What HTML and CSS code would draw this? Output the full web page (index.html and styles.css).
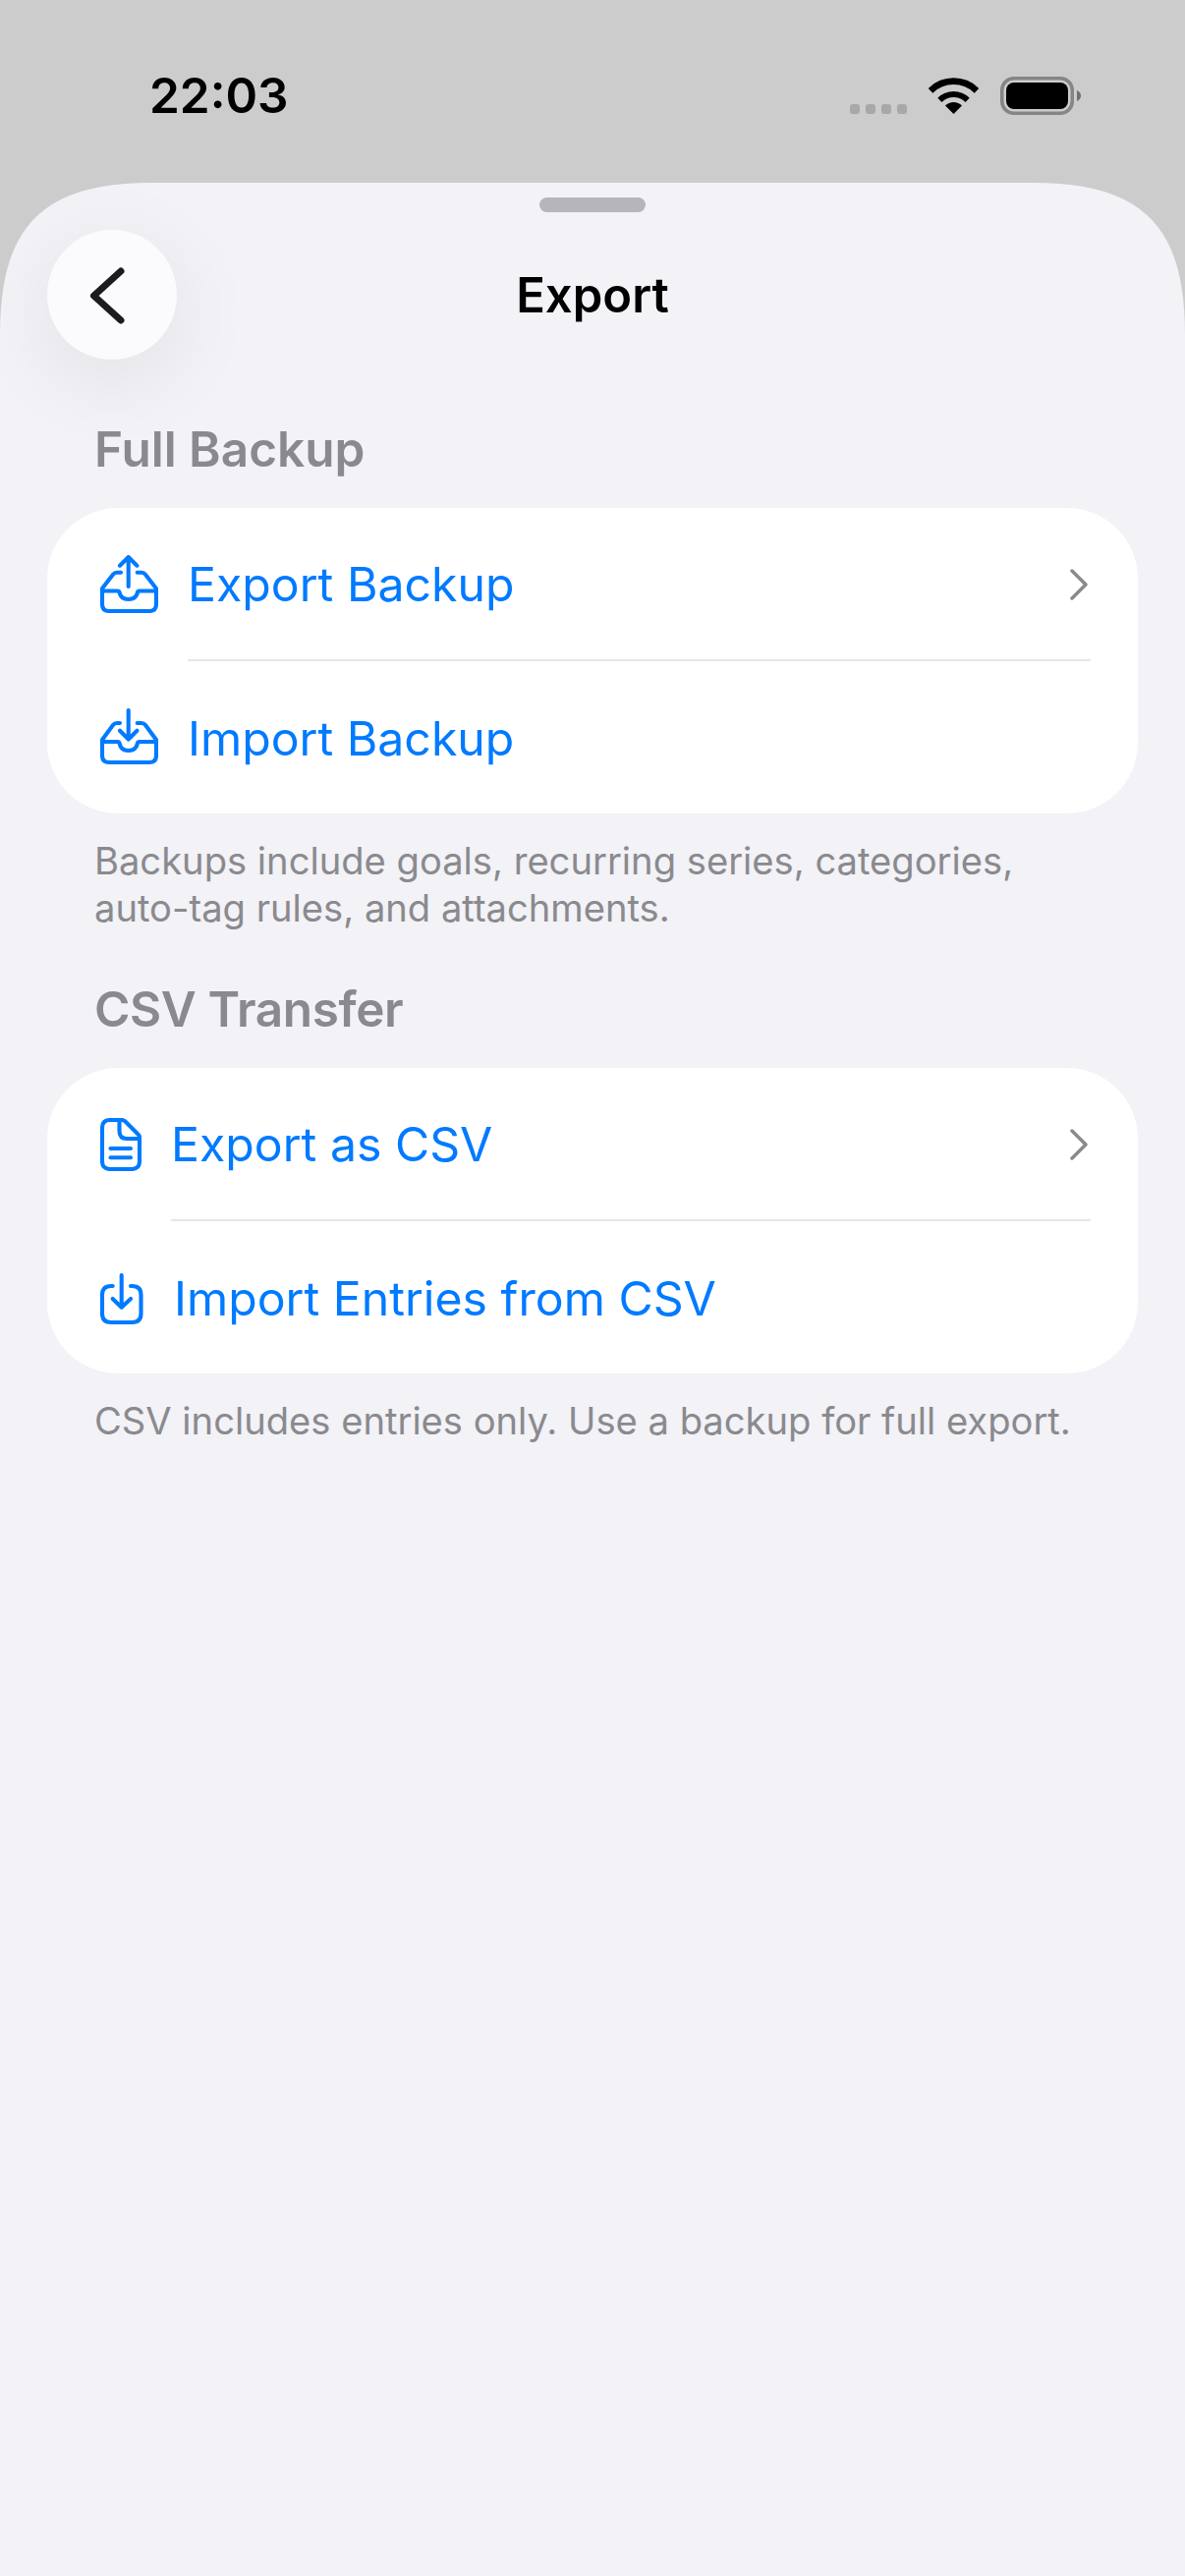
FILE: index.html
```html
<!DOCTYPE html>
<html lang="en">
<head>
<meta charset="utf-8">
<title>Export</title>
<link rel="stylesheet" href="styles.css">
</head>
<body>
<div class="screen">
  <header class="status">
    <span class="time">22:03</span>
    <div class="status-icons">
      <div class="dots"><i></i><i></i><i></i><i></i></div>
      <svg class="wifi" width="51" height="37" viewBox="0 0 51 37"><path d="M2 13.3A33.5 33.5 0 0 1 49 13.3" fill="none" stroke="#000" stroke-width="6.6"/><path d="M11.4 22.9A20 20 0 0 1 39.6 22.9" fill="none" stroke="#000" stroke-width="6"/><path d="M25.5 37L17 28.5A12 12 0 0 1 34 28.5Z" fill="#000"/></svg>
      <svg class="battery" width="82" height="39" viewBox="0 0 82 39"><rect x="1.75" y="1.75" width="71.5" height="35.5" rx="12" fill="none" stroke="#858585" stroke-width="3.5"/><rect x="6" y="6" width="63" height="27" rx="8" fill="#000"/><path d="M78 14C80.500 15 82 17 82 19.500C82 22 80.500 24 78 25Z" fill="#6f6f6f"/></svg>
    </div>
  </header>
  <main class="sheet">
    <div class="handle"></div>
    <div class="nav">
      <button class="back" type="button" aria-label="Back">
        <svg width="132" height="132" viewBox="0 0 132 132"><path d="M75 42L47.500 67L75 92" fill="none" stroke="#1c1c1e" stroke-width="7" stroke-linecap="round" stroke-linejoin="round"/></svg>
      </button>
      <h1 class="title">Export</h1>
    </div>

    <h2 class="section-title">Full Backup</h2>
    <section class="card">
      <div class="row">
        <svg class="icon tray" width="59" height="59" viewBox="0 0 59 59"><path d="M21 17.700H17Q14.500 17.700 13 19.700L2 34V50Q2 57 9 57H50Q57 57 57 50V34L46 19.700Q44.500 17.700 42 17.700H37.700"/><path d="M2 36.500H17.500Q19.300 36.500 19.500 38Q21 45 28.700 45Q36.500 45 38 38Q38.200 36.500 40 36.500H57"/><path d="M28.700 2V32M20 10.700L28.700 2L37.400 10.700"/></svg>
        <div class="row-body"><span class="row-label">Export Backup</span><svg class="chev" width="20" height="32" viewBox="0 0 20 32"><path d="M3 2L17 16L3 30"/></svg></div>
      </div>
      <div class="row">
        <svg class="icon tray" width="59" height="59" viewBox="0 0 59 59"><path d="M20 15H17Q14.500 15 13 17L2 32V48Q2 55 9 55H50Q57 55 57 48V32L46 17Q44.500 15 42 15H37.700"/><path d="M2 34H17.500Q19.300 34 19.500 35.500Q21 43 28.700 43Q36.500 43 38 35.500Q38.200 34 40 34H57"/><path d="M28.700 2V31.500M20 22.700L28.700 31.500L37.400 22.700"/></svg>
        <div class="row-body row-body-last"><span class="row-label">Import Backup</span></div>
      </div>
    </section>
    <p class="note">Backups include goals, recurring series, categories, auto-tag rules, and attachments.</p>

    <h2 class="section-title section-title-next">CSV Transfer</h2>
    <section class="card">
      <div class="row">
        <svg class="icon doc" width="42" height="54" viewBox="0 0 42 54"><path d="M22 2H10Q2 2 2 10V44Q2 52 10 52H32Q40 52 40 44V19.500Q40 18 38.500 16.500L25.500 3.500Q24 2 22 2Z"/><path d="M19.500 2.500V13Q19.500 21 27 21H39"/><path d="M10.500 31H31M10.500 40.300H31"/></svg>
        <div class="row-body"><span class="row-label">Export as CSV</span><svg class="chev" width="20" height="32" viewBox="0 0 20 32"><path d="M3 2L17 16L3 30"/></svg></div>
      </div>
      <div class="row">
        <svg class="icon box" width="44" height="53" viewBox="0 0 44 53"><path d="M12.700 13H11Q2 13 2 22V41Q2 50 11 50H32.500Q41.500 50 41.500 41V22Q41.500 13 32.500 13H31"/><path d="M21.700 2V34.500M12.700 26L21.700 34.700L31 26"/></svg>
        <div class="row-body row-body-last"><span class="row-label row-label-offset">Import Entries from CSV</span></div>
      </div>
    </section>
    <p class="note">CSV includes entries only. Use a backup for full export.</p>
  </main>
</div>
</body>
</html>
```
FILE: styles.css
```css
* { box-sizing: border-box; }
html, body { margin: 0; padding: 0; }
body { background: #cccccc; font-family: Inter, "Liberation Sans", sans-serif; }
.screen { width: 1206px; height: 2622px; display: flex; flex-direction: column; overflow: hidden; }

.status { height: 186px; flex: none; display: flex; justify-content: space-between; align-items: flex-start; padding: 67px 106px 0 152px; }
.time { font-size: 49.500px; line-height: 60px; font-weight: 600; color: #000; }
.status-icons { display: flex; align-items: flex-start; padding-top: 11px; }
.dots { display: flex; gap: 6px; margin-top: 28px; margin-right: 22px; }
.dots i { display: block; width: 10px; height: 10px; border-radius: 3px; background: #a8a8a8; }
.wifi { margin-top: 1px; margin-right: 22px; }

.sheet { flex: 1; background: #f2f2f7; clip-path: path("M0 155C0 45 42 0 155 0H1051C1164 0 1206 45 1206 155V2436H0Z"); padding: 15px 48px 0; }
.handle { width: 108px; height: 15px; border-radius: 8px; background: #b5b5ba; margin: 0 auto 18px; }

.nav { display: grid; grid-template-columns: 132px 1fr 132px; align-items: center; height: 132px; }
.back { width: 132px; height: 132px; padding: 0; border: 0; border-radius: 50%; background: #fbfbfe; box-shadow: 0 20px 90px rgba(0, 0, 0, 0.08); }
.back svg { display: block; }
.title { margin: 2px 0 0; text-align: center; font-size: 49px; line-height: 60px; font-weight: 600; color: #000; }

.section-title { margin: 61px 0 30px 48px; font-size: 49.500px; line-height: 60px; font-weight: 600; color: #8a8a8e; }
.section-title-next { margin-top: 48px; letter-spacing: -0.4px; }

.card { background: #fff; border-radius: 72px; padding-left: 54px; }
.row { display: flex; align-items: center; height: 155.500px; gap: 30px; }
.row-body { flex: 1; height: 100%; display: flex; align-items: center; justify-content: space-between; margin-right: 48px; border-bottom: 2px solid #e6e6e8; }
.row-body-last { border-bottom: 0; }
.row-label { font-size: 48.200px; line-height: 60px; padding-top: 3px; color: #007aff; }
.chev { fill: none; stroke: #8a8a8e; stroke-width: 3.500px; stroke-linecap: round; stroke-linejoin: round; margin: 2px 2px 0 0; }
.icon { flex: none; fill: none; stroke: #007aff; stroke-width: 4.100px; stroke-linecap: round; stroke-linejoin: round; }
.box { margin-top: 4px; }
.row-label-offset { margin-left: 1px; }

.note { margin: 24px 0 0 48px; width: 1000px; font-size: 38.150px; line-height: 48px; color: #8a8a8e; }
.note + .section-title { margin-top: 49px; }
```
